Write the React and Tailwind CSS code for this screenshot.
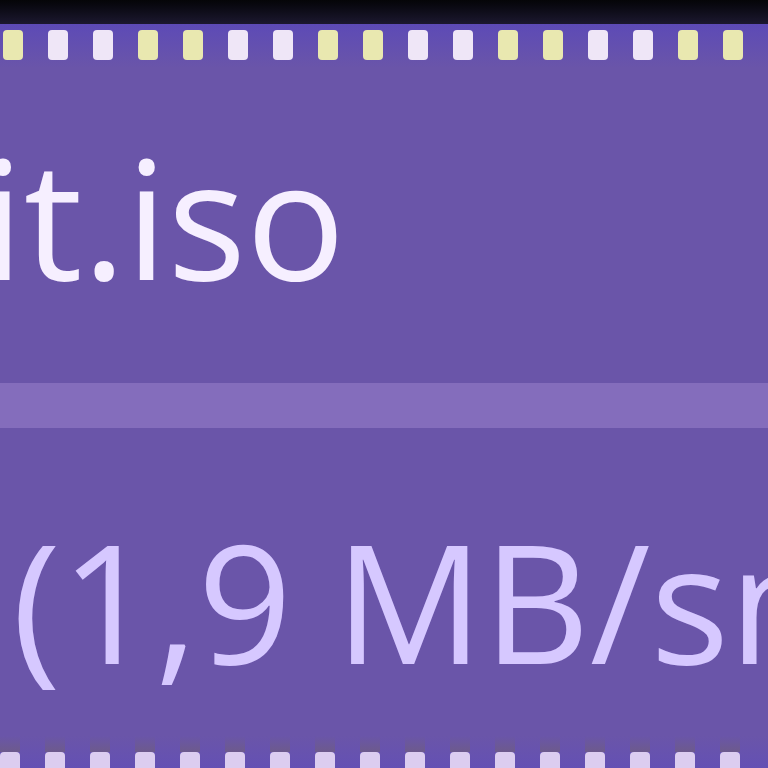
import React from "react";

const topPattern = ["y", "w", "w", "y", "y", "w", "w", "y", "y", "w", "w", "y", "y", "w", "w", "y", "y"];

export default function App() {
  return (
    <div
      className="w-[768px] h-[768px] overflow-hidden bg-[#6a55a9] flex flex-col"
      style={{ fontFamily: '"Open Sans", "Noto Sans", sans-serif' }}
    >
      <div className="h-[24px] bg-gradient-to-b from-[#050508] to-[#1c1830] shrink-0" />
      <div className="h-[44px] shrink-0 bg-gradient-to-b from-[#5d4ab6] to-[#6a55a9] flex items-start pt-[6px] pl-[3px] gap-[25px]">
        {topPattern.map((c, i) => (
          <div
            key={i}
            className={
              c === "y"
                ? "w-[20px] h-[30px] shrink-0 rounded-[4px] bg-[#e9e8b0]"
                : "w-[20px] h-[30px] shrink-0 rounded-[4px] bg-[#efe6f7]"
            }
          />
        ))}
      </div>
      <div className="mt-[66px] h-[165px] shrink-0 whitespace-nowrap text-[165px] leading-none text-[#f6efff] -ml-[18px]">
        it.iso
      </div>
      <div className="mt-[84px] h-[45px] shrink-0 bg-[#846dbc]" />
      <div className="mt-[90px] h-[165px] shrink-0 whitespace-nowrap text-[165px] leading-none text-[#d6c8ff] pl-[12px]">
        (1,9 MB/sn)
      </div>
      <div className="mt-[53px] h-[32px] shrink-0 flex items-end gap-[25px] pl-[0px] bg-gradient-to-b from-[#6a55a9] to-[#6450b4]">
        {topPattern.map((c, i) => (
          <div key={i} className="w-[20px] h-[32px] shrink-0 flex flex-col">
            <div className="h-[16px] bg-gradient-to-b from-[#6a55a9] to-[#6d5a8c]" />
            <div className="h-[16px] rounded-t-[4px] bg-[#dccdf0]" />
          </div>
        ))}
      </div>
    </div>
  );
}
